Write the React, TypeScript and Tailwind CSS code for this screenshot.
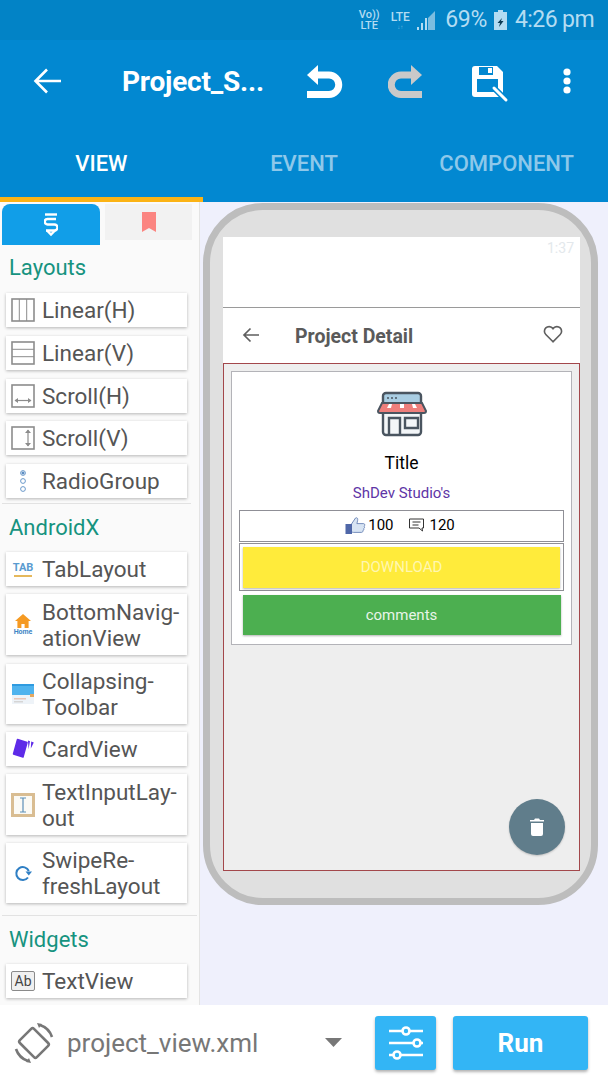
import { useState } from "react";

const font = "font-['Roboto',sans-serif]";

function LinearH() {
  return (
    <svg width="24" height="24" viewBox="0 0 24 24" fill="none" stroke="#8c8c8c">
      <rect x="1" y="1" width="22" height="22" strokeWidth="1.6" />
      <path d="M8.3 1v22M15.7 1v22" strokeWidth="1" />
    </svg>
  );
}
function LinearV() {
  return (
    <svg width="24" height="24" viewBox="0 0 24 24" fill="none" stroke="#8c8c8c">
      <rect x="1" y="1" width="22" height="22" strokeWidth="1.6" />
      <path d="M1 8.3h22M1 15.7h22" strokeWidth="1" />
    </svg>
  );
}
function ScrollH() {
  return (
    <svg width="24" height="24" viewBox="0 0 24 24" fill="none" stroke="#8c8c8c">
      <rect x="1" y="1" width="22" height="22" strokeWidth="1.6" />
      <path d="M4 16.500h16" strokeWidth="1.2" />
      <path d="M7 14l-3.500 2.500L7 19zM17 14l3.500 2.500L17 19z" fill="#8c8c8c" stroke="none" />
    </svg>
  );
}
function ScrollV() {
  return (
    <svg width="24" height="24" viewBox="0 0 24 24" fill="none" stroke="#8c8c8c">
      <rect x="1" y="1" width="22" height="22" strokeWidth="1.6" />
      <path d="M17 4v16" strokeWidth="1.2" />
      <path d="M14 7l3-3.500L20 7zM14 17l3 3.500 3-3.500z" fill="#8c8c8c" stroke="none" />
    </svg>
  );
}
function Radio() {
  return (
    <svg width="24" height="24" viewBox="0 0 24 24" fill="none" stroke="#5b8fc4" strokeWidth="0.9">
      <circle cx="12" cy="4" r="2.400" />
      <circle cx="12" cy="4" r="1.100" fill="#3a6fb0" />
      <circle cx="12" cy="12" r="2.400" />
      <circle cx="12" cy="20" r="2.400" />
    </svg>
  );
}
function TabIcon() {
  return (
    <div className="flex w-[24px] flex-col items-center">
      <span className="text-[11px] leading-[12px] font-bold text-[#5a9bd0]">TAB</span>
      <div className="mt-[1px] h-[2px] w-[18px] bg-[#e5b85c]" />
    </div>
  );
}
function HomeIcon() {
  return (
    <div className="flex w-[24px] flex-col items-center">
      <svg width="16" height="14" viewBox="0 0 16 14">
        <path d="M8 0L0 7h2.400v7h4v-4h3.200v4h4V7H16z" fill="#f59a23" />
      </svg>
      <span className="text-[7px] leading-[8px] font-bold text-[#3f86c6]">Home</span>
    </div>
  );
}
function CollapsingIcon() {
  return (
    <svg width="22" height="20" viewBox="0 0 22 20">
      <rect width="22" height="20" fill="#eef3f8" />
      <rect width="22" height="11" fill="#4fb3ee" />
      <rect y="0" width="22" height="2" fill="#2f9be0" />
      <rect x="18" y="10" width="4" height="3" fill="#e5a860" />
      <rect x="2" y="14" width="12" height="1.500" fill="#e8c6b8" />
      <rect x="2" y="17" width="9" height="1.500" fill="#d5d5d5" />
    </svg>
  );
}
function CardIcon() {
  return (
    <svg width="22" height="21" viewBox="0 0 22 21">
      <path d="M5.500 1.500L15 4.500 11 19 1.500 16z" fill="#5e2be8" stroke="#5e2be8" strokeWidth="1.500" strokeLinejoin="round" />
      <path d="M16 2.500l2 .8-1.500 8zM19.200 3.500l2.600 1-3 6z" fill="#5e2be8" />
    </svg>
  );
}
function TextInputIcon() {
  return (
    <div className="flex h-[24px] w-[24px] items-center justify-center border-[3px] border-[#d9bd92] bg-[#fbfaf5]">
      <svg width="10" height="16" viewBox="0 0 10 16" fill="none" stroke="#5d8fb8" strokeWidth="1.200">
        <path d="M2 1h6M5 1v14M2 15h6" />
      </svg>
    </div>
  );
}
function RefreshIcon() {
  return (
    <svg width="18" height="18" viewBox="0 0 18 18" fill="none" stroke="#2f7fc4" strokeWidth="2">
      <path d="M14.800 7A6.500 6.500 0 1 0 14 13.500" />
      <path d="M11.500 7.500h6.500l-3.200 4z" fill="#2f7fc4" stroke="none" />
    </svg>
  );
}
function AbIcon() {
  return (
    <div className="flex h-[20px] w-[24px] items-center justify-center rounded-[2px] border-[1.500px] border-[#8a8a8a] bg-[#f0f0f0] text-[14px] leading-none text-[#444]">
      Ab
    </div>
  );
}

function Item({ icon, lines, h = "h-[34px]" }: { icon: React.ReactNode; lines: string[]; h?: string }) {
  return (
    <div className={`ml-[6px] flex w-[181px] items-center bg-white shadow-[0_1px_3px_rgba(0,0,0,0.28)] ${h}`}>
      <div className="flex w-[36px] shrink-0 justify-center pr-[2px]">{icon}</div>
      <div className="text-[22.5px] leading-[26px] text-[#555555]">
        {lines.map((l) => (
          <div key={l}>{l}</div>
        ))}
      </div>
    </div>
  );
}

function Heading({ children, className = "" }: { children: string; className?: string }) {
  return <div className={`pl-[9px] text-[22px] leading-[26px] text-[#16937f] ${className}`}>{children}</div>;
}

function Sidebar() {
  return (
    <aside className="flex w-[200px] shrink-0 flex-col border-r border-[#e4e4e4] bg-[#fafafa]">
      <div className="flex gap-[5px] pt-[2px] pl-[2px]">
        <div className="flex h-[41px] w-[98px] items-center justify-center rounded-t-[8px] bg-[#119ee8]">
          <svg width="14" height="24" viewBox="0 0 14 24" fill="none" stroke="white" strokeWidth="2.400">
            <path d="M1 1.500h12" />
            <path d="M12 6H3.500a2.200 2.200 0 0 0 0 5.500h7a2.400 2.400 0 0 1 0 6H2" />
            <path d="M3 17.500l4 4 4-4" />
          </svg>
        </div>
        <div className="flex h-[36px] w-[87px] items-center justify-center bg-[#f2f2f2]">
          <svg width="14" height="20" viewBox="0 0 14 20">
            <path d="M0 0h14v20l-7-4-7 4z" fill="#fb8581" />
          </svg>
        </div>
      </div>
      <Heading className="mt-[10px]">Layouts</Heading>
      <div className="mt-[12px] flex flex-col gap-[8.75px]">
        <Item icon={<LinearH />} lines={["Linear(H)"]} />
        <Item icon={<LinearV />} lines={["Linear(V)"]} />
        <Item icon={<ScrollH />} lines={["Scroll(H)"]} />
        <Item icon={<ScrollV />} lines={["Scroll(V)"]} />
        <Item icon={<Radio />} lines={["RadioGroup"]} />
      </div>
      <div className="mt-[5px] ml-[2px] h-[1px] w-[189px] bg-[#e2e2e2]" />
      <Heading className="mt-[11px]">AndroidX</Heading>
      <div className="mt-[11px] flex flex-col gap-[8.25px]">
        <Item icon={<TabIcon />} lines={["TabLayout"]} />
        <Item icon={<HomeIcon />} lines={["BottomNavig-", "ationView"]} h="h-[61px]" />
        <Item icon={<CollapsingIcon />} lines={["Collapsing-", "Toolbar"]} h="h-[60px]" />
        <Item icon={<CardIcon />} lines={["CardView"]} />
        <Item icon={<TextInputIcon />} lines={["TextInputLay-", "out"]} h="h-[61px]" />
        <Item icon={<RefreshIcon />} lines={["SwipeRe-", "freshLayout"]} h="h-[60px]" />
      </div>
      <div className="mt-[12px] ml-[2px] h-[1px] w-[195px] bg-[#e2e2e2]" />
      <Heading className="mt-[11px]">Widgets</Heading>
      <div className="mt-[11px]">
        <Item icon={<AbIcon />} lines={["TextView"]} />
      </div>
    </aside>
  );
}

function Phone() {
  return (
    <div className="ml-[3px] flex h-[702px] w-[395px] flex-col rounded-[60px] border-[7px] border-[#bdbdbd] bg-[#e0e0e0] pt-[27px] pr-[11px] pl-[13px]">
      <div className="flex h-[70px] justify-end bg-white pt-[3px] pr-[6px] text-[14px] leading-[16px] text-[#e3e8ec]">1:37</div>
      <div className="flex h-[56px] items-center border-t border-[#9a9a9a] bg-white pr-[17px] pl-[19px]">
        <svg className="mb-[2px]" width="18" height="16" viewBox="0 0 18 16" fill="none" stroke="#5f5f5f" strokeWidth="1.700">
          <path d="M17 8H2M8.500 1.500L2 8l6.500 6.500" />
        </svg>
        <div className="ml-[35px] flex-1 pt-[3px] text-[19.5px] font-bold text-[#5a5a5a]">Project Detail</div>
        <svg className="mb-[3px]" width="20" height="18" viewBox="0 0 24 22" fill="none" stroke="#5f5f5f" strokeWidth="2">
          <path d="M12 20.500L3.200 11.600a5.600 5.600 0 0 1 0-8 5.600 5.600 0 0 1 8 0l.8.9.8-.9a5.600 5.600 0 0 1 8 0 5.600 5.600 0 0 1 0 8z" />
        </svg>
      </div>
      <div className="relative h-[508px] border border-[#a3474b] bg-[#eeeeee] p-[7px]">
        <div className="flex h-[274px] flex-col items-center border border-[#b3b3b8] bg-white px-[7px]">
          <svg className="mt-[19px]" width="50" height="46" viewBox="0 0 50 46">
            <rect x="6" y="2" width="38" height="14" rx="3" fill="#a9cde2" stroke="#4a5560" strokeWidth="2.400" />
            <circle cx="11" cy="7" r="1" fill="#4a5560" />
            <circle cx="15" cy="7" r="1" fill="#4a5560" />
            <circle cx="19" cy="7" r="1" fill="#4a5560" />
            <rect x="6" y="20" width="38" height="24" rx="3" fill="#f3f6f8" stroke="#4a5560" strokeWidth="2.400" />
            <path d="M5 12h40l4 8a2 2 0 0 1-2 2H3a2 2 0 0 1-2-2z" fill="#ee7f7c" stroke="#4a5560" strokeWidth="2" />
            <path d="M12 13l-2 4h4l1-4zM23 13v4h4v-4zM35 13l1 4h4l-2-4z" fill="#fff" />
            <path d="M12 44V27h11v17M28 27h13v10H28z" fill="none" stroke="#4a5560" strokeWidth="2.400" />
          </svg>
          <div className="mt-[15px] text-[17.5px] leading-[22px] text-black">Title</div>
          <div className="mt-[9px] text-[15px] leading-[20px] text-[#5e35a6]">ShDev Studio's</div>
          <div className="mt-[7px] flex h-[32px] w-full items-center justify-center border border-[#8f8f96] bg-white pb-[2px] text-[15px] text-black">
            <svg className="-ml-[3px]" width="21" height="17" viewBox="0 0 20 17">
              <path d="M6 7l4-6c2-1 2.600 1 2 3l-.6 2.600H18c1.500 0 1.600 2 .6 2.600.8.8.5 2-.4 2.400.4 1 0 1.800-.8 2 .2 1-.4 1.800-1.400 1.800H8c-1 0-1.600-.4-2-1z" fill="#d8e4f3" stroke="#5a76ad" strokeWidth="0.800" />
              <rect x="0" y="7" width="6.500" height="10" fill="#4f67a8" />
            </svg>
            <span className="ml-[2px]">100</span>
            <svg className="mr-[5px] ml-[14px]" width="17" height="14" viewBox="0 0 16 14" fill="none" stroke="#333" strokeWidth="1">
              <path d="M1 1h14v9h-1.500l.5 3-3.500-3H1z" />
              <path d="M4 4h8M4 7h6" />
            </svg>
            <span>120</span>
          </div>
          <div className="mt-[1px] h-[48px] w-full border border-[#8f8f96] px-[3px] pt-[3px]">
            <div className="flex h-[41px] items-center justify-center bg-[#ffeb3b] text-[15px] text-[#fff7b0] shadow-[0_1px_2px_rgba(0,0,0,0.3)]">DOWNLOAD</div>
          </div>
          <div className="mt-[4px] flex h-[40px] w-[318px] items-center justify-center bg-[#4caf50] text-[15px] text-[#e8f5e9] shadow-[0_1px_2px_rgba(0,0,0,0.3)]">comments</div>
        </div>
        <div className="absolute right-[14px] bottom-[15px] flex h-[56px] w-[56px] items-center justify-center rounded-full bg-[#607d8b] shadow-[0_1px_2px_rgba(0,0,0,0.2)]">
          <svg width="14" height="18" viewBox="0 0 14 18" fill="white">
            <path d="M1 5h12v11a2 2 0 0 1-2 2H3a2 2 0 0 1-2-2zM0 2h4l1-1.500h4L10 2h4v1.600H0z" />
          </svg>
        </div>
      </div>
    </div>
  );
}

export default function App() {
  const [activeTab] = useState("VIEW");
  return (
    <div className={`flex h-[1080px] w-[608px] flex-col overflow-hidden bg-white ${font}`}>
      <header className="bg-[#0288d1]">
        <div className="flex h-[40px] items-center justify-end bg-[#0283c6] pr-[14px] text-[#b3dcf2]">
          <div className="mr-[11px] flex w-[20px] flex-col items-center text-[11px] leading-[11px] font-medium">
            <span>Vo))</span>
            <span>LTE</span>
          </div>
          <div className="mr-[6px] flex w-[20px] flex-col items-center text-[12px] leading-[12px] font-medium">
            <span>LTE</span>
            <span className="text-[6px] leading-[7px] opacity-60">↓↑</span>
          </div>
          <svg className="mr-[9px]" width="20" height="20" viewBox="0 0 18 20">
            <path d="M0 20h2v-3H0zM4 20h2V13H4zM8 20h2V8H8z" fill="#b3dcf2" />
            <path d="M11 20h7V1l-7 7z" fill="#7cbde0" />
          </svg>
          <span className="text-[23px] tracking-[-0.3px]">69%</span>
          <svg className="mr-[8px] ml-[7px]" width="13" height="20" viewBox="0 0 13 20">
            <path d="M4 0h5v2h4v18H0V2h4z" fill="#b3dcf2" />
            <path d="M8 8L3.500 13H6l-1 4 4.500-6H7z" fill="#0b3b55" />
          </svg>
          <span className="text-[23px] tracking-[-0.6px]">4:26 pm</span>
        </div>
        <div className="flex h-[82px] items-center">
          <svg className="ml-[33px]" width="28" height="28" viewBox="0 0 28 28" fill="none" stroke="white" strokeWidth="2.600">
            <path d="M28 14H3M14 2.500L2.500 14 14 25.500" />
          </svg>
          <div className="ml-[61px] w-[185px] pt-[2px] text-[28px] font-bold tracking-[-0.2px] text-white">Project_S...</div>
          <svg className="mt-[4px]" width="36" height="36" viewBox="0 0 36 36" fill="none" stroke="white" strokeWidth="7">
            <path d="M9 10h13a9.500 9.500 0 0 1 0 19.500H0" />
            <path d="M0 10L11 0v20z" fill="white" stroke="none" />
          </svg>
          <svg className="mt-[4px] ml-[45px]" width="36" height="36" viewBox="0 0 36 36" fill="none" stroke="#c9c9c9" strokeWidth="7">
            <path d="M25 10H13a9.500 9.500 0 0 0 0 19.500h21" />
            <path d="M34 10L23 0v20z" fill="#c9c9c9" stroke="none" />
          </svg>
          <svg className="mt-[8px] ml-[48px]" width="38" height="38" viewBox="0 0 38 38">
            <path d="M3 0h22l6 6v22a3 3 0 0 1-3 3H3a3 3 0 0 1-3-3V3a3 3 0 0 1 3-3z" fill="white" />
            <rect x="7" y="1" width="14" height="8" fill="#0288d1" />
            <rect x="16" y="2" width="4" height="5" fill="white" />
            <rect x="5" y="13" width="21" height="13" fill="#0288d1" />
            <path d="M20 20l16 16" stroke="#0288d1" strokeWidth="6" />
            <path d="M22 22l12 12" stroke="white" strokeWidth="3" strokeLinecap="round" />
          </svg>
          <svg className="ml-[52px]" width="10" height="26" viewBox="0 0 10 26" fill="white">
            <circle cx="5" cy="4" r="3.600" />
            <circle cx="5" cy="13" r="3.600" />
            <circle cx="5" cy="22" r="3.600" />
          </svg>
        </div>
        <div className="flex h-[80px] text-[22px] font-medium">
          {["VIEW", "EVENT", "COMPONENT"].map((t) => (
            <div key={t} className={`flex flex-1 flex-col ${t === activeTab ? "text-white" : "text-[#8ec8ea]"}`}>
              <div className="flex h-[75px] items-start justify-center pt-[25px]">{t}</div>
              {t === activeTab && <div className="h-[5px] bg-[#fbb315]" />}
            </div>
          ))}
        </div>
      </header>
      <main className="flex h-[803px] overflow-hidden">
        <Sidebar />
        <div className="flex-1 bg-[#eff0fc] pt-[1px]">
          <Phone />
        </div>
      </main>
      <footer className="flex h-[75px] items-center bg-white text-[#777]">
        <svg className="ml-[13px]" width="42" height="42" viewBox="0 0 42 42" fill="none" stroke="#777" strokeWidth="2.600">
          <rect x="9" y="11" width="24" height="20" rx="2" transform="rotate(45 21 21)" />
          <path d="M27 3a19 19 0 0 1 12 12M15 39A19 19 0 0 1 3 27" />
          <path d="M24 1l5 1-3 4zM18 41l-5-1 3-4z" fill="#777" stroke="none" />
        </svg>
        <div className="ml-[12px] w-[258px] pt-[2px] text-[26px]">project_view.xml</div>
        <svg width="17" height="9" viewBox="0 0 17 9">
          <path d="M0 0h17l-8.500 9z" fill="#777" />
        </svg>
        <div className="ml-[33px] flex h-[54px] w-[61px] items-center justify-center rounded-[3px] bg-[#33b5f5] shadow-[0_2px_3px_rgba(0,0,0,0.3)]">
          <svg width="36" height="36" viewBox="0 0 36 36" fill="none" stroke="white" strokeWidth="2.600">
            <path d="M1 6h13M22 6h13M1 18h24M33 18h2M1 30h4M13 30h22" />
            <circle cx="18" cy="6" r="3.500" />
            <circle cx="29" cy="18" r="3.500" />
            <circle cx="9" cy="30" r="3.500" />
          </svg>
        </div>
        <div className="ml-[17px] flex h-[54px] w-[135px] items-center justify-center rounded-[3px] bg-[#33b5f5] pt-[2px] text-[26px] font-bold text-white shadow-[0_2px_3px_rgba(0,0,0,0.3)]">Run</div>
      </footer>
    </div>
  );
}
